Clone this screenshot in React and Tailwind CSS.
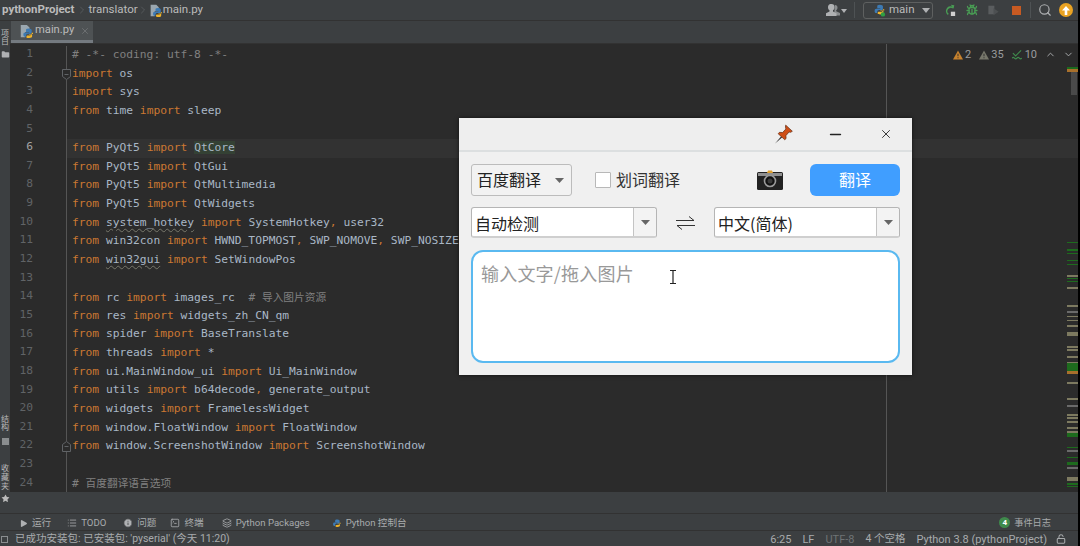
import { ChevronRight, ChevronUp, ChevronDown, Search, X, Minus, Star, Bug, Play, Folder, List, Info, SquareTerminal, Layers, LockOpen } from "lucide-react";

const UI_FONT = "font-['Roboto','Noto_Sans_CJK_SC',sans-serif]";
const CJK_FONT = "font-['Noto_Sans_CJK_SC','Noto_Sans',sans-serif]";

// token kinds: k keyword, c comment, u underlined module, h highlighted, z cjk comment
const CODE = [
  [["c", "# -*- coding: utf-8 -*-"]],
  [["k", "import"], ["", " os"]],
  [["k", "import"], ["", " sys"]],
  [["k", "from"], ["", " time "], ["k", "import"], ["", " sleep"]],
  [],
  [["k", "from"], ["", " PyQt5 "], ["k", "import"], ["", " "], ["h", "QtCore"]],
  [["k", "from"], ["", " PyQt5 "], ["k", "import"], ["", " QtGui"]],
  [["k", "from"], ["", " PyQt5 "], ["k", "import"], ["", " QtMultimedia"]],
  [["k", "from"], ["", " PyQt5 "], ["k", "import"], ["", " QtWidgets"]],
  [["k", "from"], ["", " "], ["u", "system_hotkey"], ["", " "], ["k", "import"], ["", " SystemHotkey"], ["k", ","], ["", " user32"]],
  [["k", "from"], ["", " win32con "], ["k", "import"], ["", " HWND_TOPMOST"], ["k", ","], ["", " SWP_NOMOVE"], ["k", ","], ["", " SWP_NOSIZE"]],
  [["k", "from"], ["", " "], ["u", "win32gui"], ["", " "], ["k", "import"], ["", " SetWindowPos"]],
  [],
  [["k", "from"], ["", " rc "], ["k", "import"], ["", " images_rc  "], ["c", "# "], ["z", "导入图片资源"]],
  [["k", "from"], ["", " res "], ["k", "import"], ["", " widgets_zh_CN_qm"]],
  [["k", "from"], ["", " spider "], ["k", "import"], ["", " BaseTranslate"]],
  [["k", "from"], ["", " threads "], ["k", "import"], ["", " *"]],
  [["k", "from"], ["", " ui.MainWindow_ui "], ["k", "import"], ["", " Ui_MainWindow"]],
  [["k", "from"], ["", " utils "], ["k", "import"], ["", " b64decode"], ["k", ","], ["", " generate_output"]],
  [["k", "from"], ["", " widgets "], ["k", "import"], ["", " FramelessWidget"]],
  [["k", "from"], ["", " window.FloatWindow "], ["k", "import"], ["", " FloatWindow"]],
  [["k", "from"], ["", " window.ScreenshotWindow "], ["k", "import"], ["", " ScreenshotWindow"]],
  [],
  [["c", "# "], ["z", "百度翻译语言选项"]],
];

const TOKEN_CLASS = {
  "": "text-[#a9b7c6]",
  k: "text-[#cc7832]",
  c: "text-[#808080]",
  z: "text-[#808080] text-[10.7px] font-['Noto_Sans_CJK_SC',sans-serif]",
  u: "text-[#a9b7c6] underline decoration-wavy decoration-[#77776b] decoration-1 underline-offset-2",
  h: "text-[#a9b7c6] bg-[#344134]",
};

const G = "#1d6b1d";
const T = "#7d7a60";
const N = "#6a6a6a";
const O = "#a8702c";
// error stripe marks: [y, height, colour]
const MARKS = [
  [67, 2, G], [69, 3, O], [242, 1, G], [249, 2, G], [253, 1, G], [260, 1, G], [264, 1, G],
  [275, 2, T], [278, 1, G], [281, 1, G], [287, 2, T], [305, 2, T], [311, 2, N], [316, 1, T],
  [320, 1, T], [325, 2, T], [332, 4, T], [346, 2, T], [349, 2, T], [356, 2, T], [362, 1, T],
  [363, 8, G], [371, 3, O], [382, 2, T], [398, 2, T], [405, 2, N], [414, 2, T], [417, 2, T],
  [421, 2, T], [427, 2, T], [431, 2, T], [433, 4, G], [447, 1, G], [450, 2, N], [457, 1, G],
  [462, 3, G], [467, 2, N], [477, 4, T], [483, 2, G], [486, 1, G],
];

function PyIcon({ size = 14, dot = false, doc = true }) {
  return (
    <svg width={size} height={size} viewBox="0 0 16 16" className="shrink-0">
      {doc && <path d="M2 1h7l3 3v5H7v6H2z" fill="#9aa7b0" />}
      <path d="M11 6C8 6 8 7 8 8.500V10h3.500v.6H7C5.500 10.600 5 11.500 5 13c0 1.500.5 2.500 2 2.500h1V14c0-1.200 1-2 2.200-2H13c1 0 1.500-.6 1.500-1.500V8C14.500 6.800 13 6 11 6z" fill="#3d7ab3" transform={doc ? "translate(0 -1)" : "translate(-2 -4)"} />
      <path d="M11.500 16c2.500 0 3.500-.8 3.500-2v-2h-3.500v-.5H16V10h-1.500v1.200c0 1-.8 1.800-2 1.800H10c-1 0-1.500.6-1.500 1.500V15c0 .7 1.200 1 3 1z" fill="#f0b429" transform={doc ? "" : "translate(-2 -3)"} />
      {dot && <circle cx="12.500" cy="13" r="2.500" fill="#2f9e44" />}
    </svg>
  );
}

function TopBar() {
  return (
    <div className={`h-[21px] shrink-0 flex items-center bg-[#3c3f41] border-b border-[#323232] text-[11.5px] text-[#bbbbbb] ${UI_FONT}`}>
      <span className="ml-[2px] font-bold">pythonProject</span>
      <ChevronRight size={12} strokeWidth={1} className="ml-[1px] text-[#6f7375]" />
      <span className="ml-[1px]">translator</span>
      <ChevronRight size={12} strokeWidth={1} className="-ml-[1px] text-[#6f7375]" />
      <PyIcon size={13} />
      <span className="ml-[1px]">main.py</span>

      <div className="ml-auto flex items-center pr-[5px]">
        <svg width="21" height="12" viewBox="0 0 21 12" className="text-[#afb1b3]">
          <path d="M9 1a2.500 2.500 0 0 1 2.500 2.500c0 1.300-.5 2.300-1.300 2.800v1L14 9v2.500H8z" fill="#8a8d8f" />
          <path d="M5.500 0a3 3 0 0 1 3 3.200c0 1.500-.6 2.600-1.500 3.100v1.200l3.500 1.700V12H0V9.200l3.500-1.700V6.300C2.600 5.800 2 4.700 2 3.200A3 3 0 0 1 5.500 0z" fill="currentColor" />
          <path d="M15 5h6l-3 4z" fill="currentColor" />
        </svg>
        <div className="ml-[7px] w-px h-[16px] bg-[#4e5254]" />
        <div className="ml-[8px] w-[70px] h-[17px] flex items-center border border-[#5e6060] rounded-[3px] pl-[8px]">
          <PyIcon size={14} dot doc={false} />
          <span className="ml-[3px] text-[#bbbbbb]">main</span>
          <svg width="8" height="5" viewBox="0 0 8 5" className="ml-[7px]"><path d="M0 0h8L4 5z" fill="#afb1b3" /></svg>
        </div>
        <svg width="12" height="12" viewBox="0 0 14 14" className="ml-[11px]" fill="none">
          <path d="M10.500 4.500A4.500 4.500 0 1 0 5 12" stroke="#499c54" strokeWidth="1.800" />
          <path d="M8 1l4 .5-1 4z" fill="#499c54" />
          <rect x="8" y="9" width="5" height="5" fill="#d0d0d0" />
        </svg>
        <Bug size={12} strokeWidth={2.6} className="ml-[10px] text-[#499c54]" />
        <svg width="13" height="12" viewBox="0 0 14 14" className="ml-[9px]">
          <path d="M1 2h7v10H1z" fill="#5a5d5f" />
          <path d="M7 5l6 4-6 4z" fill="#4d5052" />
        </svg>
        <div className="ml-[12px] w-[9px] h-[9px] bg-[#c75a22]" />
        <div className="ml-[9px] w-px h-[16px] bg-[#4e5254]" />
        <Search size={14} strokeWidth={2} className="ml-[7px] text-[#afb1b3]" />
        <div className="ml-[7px] w-[14px] h-[14px] rounded-full bg-[#eaa323] flex items-center justify-center">
          <svg width="8" height="9" viewBox="0 0 8 9"><path d="M4 0l4 4.500H5.300V9H2.700V4.500H0z" fill="#fff" /></svg>
        </div>
      </div>
    </div>
  );
}

function TabBar() {
  return (
    <div className={`h-[23px] shrink-0 flex bg-[#3c3f41] border-b border-[#323232] text-[11.2px] text-[#bbbbbb] ${UI_FONT}`}>
      <div className="ml-[1px] w-[82px] flex items-center pl-[8px] bg-[#4e5254] border-b-[3px] border-[#747a80]">
        <PyIcon size={14} />
        <span className="ml-[2px]">main.py</span>
        <X size={10} strokeWidth={1.2} className="ml-[6px] text-[#8a8d8f]" />
      </div>
    </div>
  );
}

function LeftStrip() {
  return (
    <div className={`w-[10px] shrink-0 flex flex-col items-center bg-[#3c3f41] text-[#bbbbbb] text-[8px] leading-[9px] ${CJK_FONT}`}>
      <span className="[writing-mode:vertical-rl] mt-[8px] h-[16px] shrink-0">项目</span>
      <Folder size={9} fill="#afb1b3" strokeWidth={0} className="mt-[5px] shrink-0" />
      <span className="[writing-mode:vertical-rl] mt-auto h-[18px] shrink-0">结构</span>
      <span className="mt-[5px] w-[7px] h-[7px] shrink-0 bg-[#8a8d8f]" />
      <span className="[writing-mode:vertical-rl] mt-[19px] h-[27px] shrink-0 tracking-[1px]">收藏夹</span>
      <Star size={9} fill="#bbbbbb" strokeWidth={0} className="mt-[3px] mb-[10px] shrink-0" />
    </div>
  );
}

function FoldMark({ flip }) {
  return (
    <svg width="9" height="11" viewBox="0 0 9 11" className="absolute left-[52px] top-[4px] bg-[#2b2b2b]" fill="none" stroke="#606366">
      <path d={flip ? "M.5 10.500V3.500L4.500 .5l4 3v7z" : "M.5 .5h8v7l-4 3-4-3z"} />
      <path d="M2.500 5.500h4" />
    </svg>
  );
}

function CodeLine({ n, tokens }) {
  const current = n === 6;
  return (
    <div className={`relative h-[18.65px] flex items-center whitespace-pre ${current ? "bg-[#323232]" : ""}`}>
      <div className={`w-[57px] h-full shrink-0 bg-[#2b2b2b] border-r border-[#555555] pr-[33px] text-right ${current ? "text-[#a4a3a3]" : "text-[#606366]"}`}>
        {n}
      </div>
      {(n === 2 || n === 22) && <FoldMark flip={n === 22} />}
      <div className="pl-[5px]">
        {tokens.map(([kind, text], i) => (
          <span key={i} className={TOKEN_CLASS[kind]}>{text}</span>
        ))}
      </div>
    </div>
  );
}

function InspectionWidget() {
  return (
    <div className={`absolute right-[2px] top-[5px] flex items-center text-[11px] text-[#9a9c9e] leading-none ${UI_FONT}`}>
      <svg width="10" height="10" viewBox="0 0 11 10"><path d="M5.500 0L11 10H0z" fill="#c7822e" /><path d="M5 3.500h1v3H5zM5 7.500h1v1H5z" fill="#2b2b2b" /></svg>
      <span className="ml-[2px]">2</span>
      <svg width="10" height="10" viewBox="0 0 11 10" className="ml-[8px]"><path d="M5.500 0L11 10H0z" fill="#77776b" /><path d="M5 3.500h1v3H5zM5 7.500h1v1H5z" fill="#2b2b2b" /></svg>
      <span className="ml-[2px]">35</span>
      <svg width="10" height="11" viewBox="0 0 11 11" className="ml-[8px]" fill="none" stroke="#3f8a4c" strokeWidth="1.300"><path d="M1 4l3 3 6-6" /><path d="M0 9.500q1.300-1.500 2.700 0t2.700 0 2.700 0 2.700 0" /></svg>
      <span className="ml-[3px]">10</span>
      <ChevronUp size={11} strokeWidth={2} className="ml-[8px] text-[#afb1b3]" />
      <ChevronDown size={11} strokeWidth={2} className="ml-[7px] mr-[2px] text-[#afb1b3]" />
    </div>
  );
}

function Editor() {
  return (
    <div className="relative flex-1 min-h-0 bg-[#2b2b2b] pt-[2px] overflow-hidden font-['DejaVu_Sans_Mono','Noto_Sans_CJK_SC',monospace] text-[11.28px]">
      {CODE.map((tokens, i) => (
        <CodeLine key={i} n={i + 1} tokens={tokens} />
      ))}
      <div className="absolute left-[876px] top-0 bottom-0 w-px bg-[#555555]" />
      <InspectionWidget />
      <svg width="11" height="448" viewBox="0 44 11 448" className="absolute right-0 top-0">
        <rect x="4" y="67" width="6" height="28" fill="#4a4a4a" />
        {MARKS.map(([y, h, c], i) => (
          <rect key={i} x="0" y={y} width="11" height={h} fill={c} />
        ))}
      </svg>
    </div>
  );
}

function ToolItem({ icon, label, className }) {
  return (
    <div className={`flex items-center whitespace-nowrap ${className}`}>
      {icon}
      <span className="ml-[4px]">{label}</span>
    </div>
  );
}

function BottomBars() {
  return (
    <div className={`shrink-0 bg-[#3c3f41] text-[#a8abad] ${UI_FONT}`}>
      <div className="h-[18px] flex items-center border-t border-[#323232] border-b text-[9.6px] pl-[19px] pt-[2px]">
        <ToolItem icon={<Play size={9} fill="#afb1b3" strokeWidth={0} />} label="运行" />
        <ToolItem className="ml-[16px]" icon={<List size={10} strokeWidth={2} />} label="TODO" />
        <ToolItem className="ml-[17px]" icon={<Info size={10} fill="#afb1b3" stroke="#3c3f41" strokeWidth={2} />} label="问题" />
        <ToolItem className="ml-[14px]" icon={<SquareTerminal size={10} strokeWidth={2} />} label="终端" />
        <ToolItem className="ml-[18px]" icon={<Layers size={10} strokeWidth={2} />} label="Python Packages" />
        <ToolItem className="ml-[21px]" icon={<PyIcon size={11} doc={false} />} label="Python 控制台" />
        <div className="ml-auto mr-[27px] flex items-center">
          <span className="w-[11px] h-[11px] rounded-full bg-[#3f8a4c] text-white text-[8px] font-bold flex items-center justify-center">4</span>
          <span className="ml-[4px] text-[9.200px]">事件日志</span>
        </div>
      </div>
      <div className="h-[15px] flex items-center text-[11px] text-[#a8abad] leading-none pt-[1px]">
        <span className="ml-[1px] w-[7px] h-[7px] border border-[#8a8d8f]" />
        <span className="ml-[7px] text-[10.500px]">已成功安装包: 已安装包: 'pyserial' (今天 11:20)</span>
        <span className="ml-auto">6:25</span>
        <span className="ml-[11px]">LF</span>
        <span className="ml-[11px] text-[#6f7375]">UTF-8</span>
        <span className="ml-[11px] text-[10.500px]">4 个空格</span>
        <span className="ml-[11px]">Python 3.8 (pythonProject)</span>
        <LockOpen size={10} strokeWidth={2.5} className="ml-[9px] mr-[12px]" />
      </div>
    </div>
  );
}

function ComboArrow() {
  return (
    <svg width="9" height="5" viewBox="0 0 9 5"><path d="M0 0h9L4.500 5z" fill="#666666" /></svg>
  );
}

function LangCombo({ label, width }) {
  return (
    <div className={`${width} h-[31px] flex items-stretch bg-white border border-[#b5b5b5] border-b-2 border-b-[#cfcfcf] rounded-[3px] text-[16px] text-[#222222]`}>
      <span className="flex-1 pl-[3px] pt-[1px] flex items-center">{label}</span>
      <span className="w-[23px] flex items-center justify-center bg-[#f3f3f3] border-l border-[#c4c4c4] rounded-r-[3px]">
        <ComboArrow />
      </span>
    </div>
  );
}

function PinIcon() {
  return (
    <svg width="20" height="20" viewBox="0 0 18 18">
      <path d="M1 17.500l5.500-6.500 1 1z" fill="#333" />
      <path d="M10.500 1l6 5.500-1.500 1-1.500-.3-2.800 3.300.2 2.500-1.200 1.200-6-5.500 1.200-1.200 2.800.2 3-3.200-.4-1.700z" fill="#cf4f17" stroke="#5a2a12" strokeWidth=".6" />
    </svg>
  );
}

function CameraIcon() {
  return (
    <svg width="26" height="20" viewBox="0 0 26 20">
      <rect x="0" y="2" width="26" height="18" rx="1.500" fill="#222222" />
      <rect x="1" y="3" width="24" height="3" fill="#8f8f8f" />
      <path d="M10 3l1-2.500h4L16 3z" fill="#e0a030" />
      <circle cx="13" cy="11" r="5.500" fill="#111" stroke="#9a9a9a" strokeWidth="1.600" />
      <circle cx="13" cy="11" r="2.500" fill="#3a3a3a" />
    </svg>
  );
}

function TextCursor() {
  return (
    <svg width="8" height="14" viewBox="0 0 8 14" fill="none" stroke="#222" strokeWidth="1.200" className="absolute left-[196px] top-[18px]">
      <path d="M1 .5h6M1 13.500h6M4 .5v13" />
    </svg>
  );
}

function TranslatorWindow() {
  return (
    <div className={`absolute left-[459px] top-[118px] w-[453px] h-[257px] bg-[#f0f0f0] shadow-[0_0_4px_rgba(0,0,0,0.6)] ${CJK_FONT}`}>
      <div className="h-[34px] flex items-center bg-[#eeeeee] border-b-2 border-[#dcdfe0] text-[#222222]">
        <div className="ml-auto"><PinIcon /></div>
        <Minus size={17} strokeWidth={2} className="ml-[33px]" />
        <X size={14} strokeWidth={1.500} className="ml-[35px] mr-[19px]" />
      </div>
      <div className="px-[12px] pt-[12px]">
        <div className="flex items-center h-[32px] whitespace-nowrap">
          <div className="w-[101px] h-[32px] shrink-0 flex items-center bg-[#f2f2f2] border border-[#bcbcbc] rounded-[3px] pl-[5px] pb-[2px] text-[16px] text-[#222222]">
            百度翻译
            <span className="ml-[14px] pt-[2px]"><ComboArrow /></span>
          </div>
          <span className="ml-[23px] w-[16px] h-[16px] shrink-0 bg-white border border-[#b8b8b8] rounded-[1px]" />
          <span className="ml-[5px] pb-[2px] text-[16px] text-[#333333]">划词翻译</span>
          <span className="ml-[77px]"><CameraIcon /></span>
          <button className="ml-[27px] w-[90px] h-[32px] shrink-0 rounded-[6px] bg-[#409eff] pb-[2px] text-white text-[16px]">翻译</button>
        </div>
        <div className="mt-[11px] flex items-center">
          <LangCombo label="自动检测" width="w-[186px]" />
          <svg width="19" height="14" viewBox="0 0 19 14" fill="none" stroke="#333" strokeWidth="1" className="ml-[19px]">
            <path d="M0 4.500h18L13 .5M19 9.500H1l5 4" />
          </svg>
          <span className="ml-[19px]"><LangCombo label="中文(简体)" width="w-[186px]" /></span>
        </div>
        <div className="relative mt-[12px] h-[113px] bg-white border-2 border-[#5ab9f0] rounded-[12px] pl-[8px] pt-[8px] text-[18px] tracking-[0.2px] text-[#999999]">
          输入文字/拖入图片
          <TextCursor />
        </div>
      </div>
    </div>
  );
}

export default function App() {
  return (
    <div className="relative w-[1080px] h-[546px] overflow-hidden bg-black pr-[2px]">
      <div className="h-full flex flex-col">
        <TopBar />
        <div className="flex-1 min-h-0 flex">
          <LeftStrip />
          <div className="flex-1 min-w-0 flex flex-col bg-[#3c3f41]">
            <TabBar />
            <Editor />
            <div className="h-[21px] shrink-0" />
          </div>
        </div>
        <BottomBars />
      </div>
      <TranslatorWindow />
    </div>
  );
}
